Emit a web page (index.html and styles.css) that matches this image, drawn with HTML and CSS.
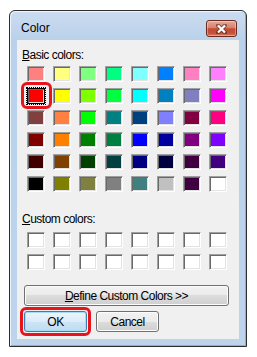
FILE: index.html
```html
<!DOCTYPE html>
<html lang="en">
<head>
  <meta charset="UTF-8" />
  <meta name="viewport" content="width=device-width, initial-scale=1.0" />
  <title>Color</title>
  <link rel="stylesheet" href="styles.css">
</head>
<body>
  <div class="window">
    <!-- Title bar -->
    <div class="titlebar">
      <span class="title">Color</span>
      <button class="close" aria-label="Close">
        <svg width="11" height="10" viewBox="0 0 11 10">
          <path d="M2 1.5 L9 8.5 M9 1.5 L2 8.5" stroke="#3c1a14" stroke-width="4.2" stroke-linecap="round" opacity=".5" fill="none"/>
          <path d="M2 1.5 L9 8.5 M9 1.5 L2 8.5" stroke="#fff" stroke-width="2.2" fill="none"/>
        </svg>
      </button>
    </div>

    <!-- Dialog body -->
    <div class="client">
      <div class="label"><u>B</u>asic colors:</div>
      <div class="swatches" id="basic"></div>

      <div class="label label-custom"><u>C</u>ustom colors:</div>
      <div class="swatches swatches-custom" id="custom"></div>

      <button class="btn btn-define"><u>D</u>efine Custom Colors &gt;&gt;</button>
      <div class="actions">
        <button class="btn btn-ok">OK</button>
        <button class="btn">Cancel</button>
      </div>
    </div>
  </div>

  <script>
    // Standard basic palette, row by row
    const basicColors = [
      '#ff8080', '#ffff80', '#80ff80', '#00ff80', '#80ffff', '#0080ff', '#ff80c0', '#ff80ff',
      '#ff0000', '#ffff00', '#80ff00', '#00ff40', '#00ffff', '#0080c0', '#8080c0', '#ff00ff',
      '#804040', '#ff8040', '#00ff00', '#008080', '#004080', '#8080ff', '#800040', '#ff0080',
      '#800000', '#ff8000', '#008000', '#008040', '#0000ff', '#0000a0', '#800080', '#8000ff',
      '#400000', '#804000', '#004000', '#004040', '#000080', '#000040', '#400040', '#400080',
      '#000000', '#808000', '#808040', '#808080', '#408080', '#c0c0c0', '#400040', '#ffffff'
    ];
    const selectedIndex = 8;

    const basicEl = document.getElementById('basic');
    basicColors.forEach((color, i) => {
      const swatch = document.createElement('div');
      swatch.className = 'swatch';
      swatch.style.background = color;
      if (i === selectedIndex) swatch.classList.add('selected');
      basicEl.appendChild(swatch);
    });

    // Custom colors start out empty (white)
    const customEl = document.getElementById('custom');
    for (let i = 0; i < 16; i++) {
      const swatch = document.createElement('div');
      swatch.className = 'swatch';
      customEl.appendChild(swatch);
    }
  </script>
</body>
</html>
```

FILE: styles.css
```css
* {
  box-sizing: border-box;
}
body {
  margin: 0;
  background: #fff;
  font-family: "Liberation Sans", Arial, sans-serif;
  font-size: 12px;
  color: #000;
}
/* Window frame */
.window {
  margin: 10px 0 0 9px;
  width: 238px;
  height: 337px;
  border: 1px solid #2e2e2e;
  border-radius: 6px 6px 0 0;
  background: linear-gradient(#cbdcf0, #b9d1ea 30px, #bdd4ec);
  box-shadow: inset 1px 1px 0 rgba(255, 255, 255, 0.7), inset -1px -1px 0 #3fd0f0;
  display: flex;
  flex-direction: column;
}
.titlebar {
  height: 29px;
  display: flex;
  align-items: flex-start;
  justify-content: space-between;
  padding: 0 9px 0 11px;
}
.title {
  margin-top: 10px;
  line-height: 15px;
}
.close {
  margin-top: 9px;
  width: 31px;
  height: 17px;
  padding: 0;
  border: 1px solid #6a2a20;
  border-radius: 3px;
  background: linear-gradient(#e8a899, #d8806e 45%, #c24a32 52%, #c4503a 80%, #d9785f);
  box-shadow: inset 0 0 0 1px rgba(255, 255, 255, 0.35);
  display: flex;
  align-items: center;
  justify-content: center;
}
/* Client area */
.client {
  flex: 1;
  margin: 0 7px 7px;
  background: #f0f0f0;
  display: flex;
  flex-direction: column;
  align-items: flex-start;
  padding-top: 8px;
}
.label {
  margin-left: 5px;
  line-height: 15px;
  letter-spacing: -0.5px;
}
.label-custom {
  margin-top: 20px;
}
.swatches {
  display: grid;
  grid-template-columns: repeat(8, 18px);
  grid-auto-rows: 16px;
  gap: 6px 8px;
  margin: 3px 0 0 10px;
}
.swatches-custom {
  margin-top: 5px;
}
.swatch {
  background: #fff;
  border: 1px solid;
  border-color: #a0a0a0 #fff #fff #a0a0a0;
  box-shadow: inset 1px 1px 0 #696969, inset -1px -1px 0 #e3e3e3;
}
.swatch.selected {
  position: relative;
  border-color: #000;
  outline: 1px dotted #000;
}
/* Red highlight drawn over the picked colour */
.swatch.selected::after {
  content: "";
  position: absolute;
  top: -7px;
  bottom: -6px;
  left: -7px;
  right: -8px;
  border: 3px solid #e8141c;
  border-radius: 6px;
}
/* Buttons */
.btn {
  font: inherit;
  letter-spacing: -0.5px;
  color: #000;
  height: 21px;
  padding: 0;
  border: 1px solid #707070;
  border-radius: 3px;
  background: linear-gradient(#f2f2f2, #ebebeb 50%, #dddddd 50%, #cfcfcf);
  box-shadow: inset 0 0 0 1px #fcfcfc;
}
.btn-define {
  margin: 15px 0 0 7px;
  width: 205px;
}
.actions {
  display: flex;
  gap: 9px;
  margin: 5px 0 0 7px;
}
.actions .btn {
  width: 63px;
}
.btn-ok {
  position: relative;
  border-color: #3c7fb1;
  background: linear-gradient(#ecf5fc, #dcecf8 50%, #cde5f6 50%, #bfdcf2);
  box-shadow: inset 0 0 0 1px #a6dcf6;
}
.btn-ok::after {
  content: "";
  position: absolute;
  inset: -5px;
  border: 3px solid #e8141c;
  border-radius: 6px;
}
```
